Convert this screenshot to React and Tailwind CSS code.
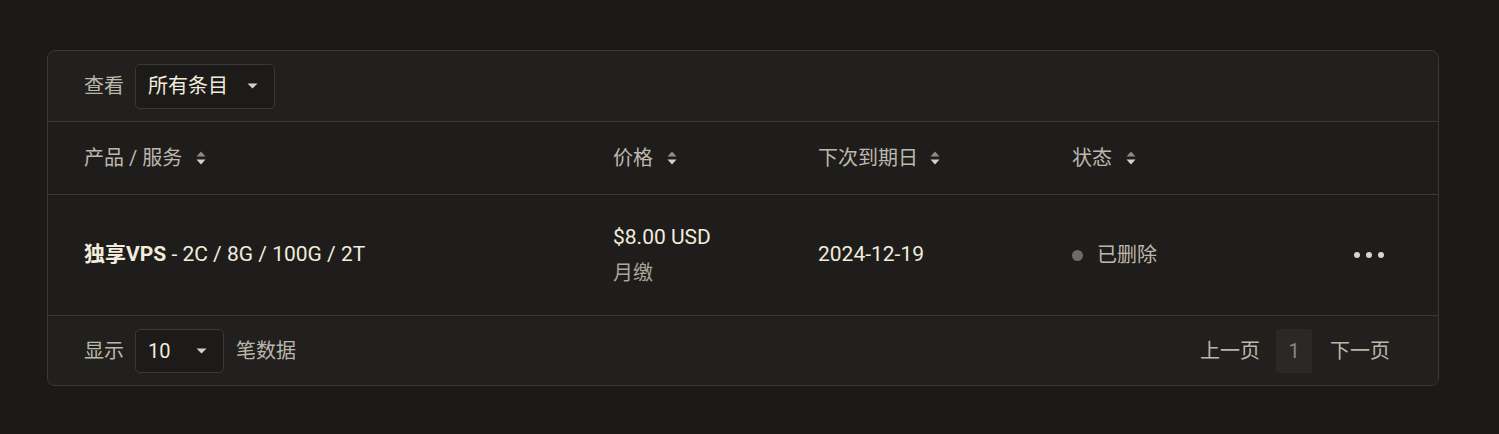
import React from "react";

const font = { fontFamily: 'Roboto, "Noto Sans CJK SC", "Noto Sans", sans-serif' };

function SortIcon({ gap = "ml-[14px]" }) {
  return (
    <svg width="10" height="18" viewBox="0 0 10 18" className={`${gap} shrink-0`}>
      <path d="M5 2.5 L9.5 7.5 L0.5 7.5 Z" fill="#8f8b84" />
      <path d="M5 15.5 L9.5 10.5 L0.5 10.5 Z" fill="#d6d1c6" />
    </svg>
  );
}

function Caret() {
  return (
    <svg width="11" height="6" viewBox="0 0 11 6">
      <path d="M0.5 0.5 L10.5 0.5 L5.5 5.5 Z" fill="#d6d1c6" />
    </svg>
  );
}

export default function App() {
  return (
    <div className="min-h-[434px] w-full bg-[#1b1a18] pt-[50px] px-[47px] text-[20px]" style={font}>
      <div className="w-[1392px] rounded-[8px] border border-[#3b3936] bg-[#1e1d1b] overflow-hidden">
        {/* toolbar */}
        <div className="h-[71px] flex items-center pl-[36px] bg-[#21201e] border-b border-[#3b3936]">
          <span className="text-[#bbb6ab]">查看</span>
          <div className="ml-[11px] h-[45px] w-[140px] rounded-[5px] border border-[#3b3936] bg-[#1c1b19] flex items-center pl-[12px] pr-[16px] justify-between">
            <span className="text-[#f1ecdc]">所有条目</span>
            <Caret />
          </div>
        </div>
        {/* header */}
        <div className="h-[73px] flex items-center pl-[36px] border-b border-[#3b3936] text-[#bdb8ad]">
          <div className="w-[529px] flex items-center">产品 / 服务<SortIcon /></div>
          <div className="w-[205px] flex items-center">价格<SortIcon /></div>
          <div className="w-[254px] flex items-center">下次到期日<SortIcon gap="ml-[12px]" /></div>
          <div className="flex items-center">状态<SortIcon /></div>
        </div>
        {/* row */}
        <div className="h-[121px] flex items-center pl-[36px] border-b border-[#3b3936] text-[21px]">
          <div className="w-[529px] text-[#f1ecdc]">
            <span className="font-bold">独享VPS</span> - 2C / 8G / 100G / 2T
          </div>
          <div className="w-[205px] flex flex-col">
            <span className="text-[#f1ecdc] leading-[26px]">$8.00 USD</span>
            <span className="text-[#aaa69c] text-[20px] mt-[10px] leading-[26px]">月缴</span>
          </div>
          <div className="w-[254px] text-[#f1ecdc]">2024-12-19</div>
          <div className="w-[268px] flex items-center text-[#bdb8ad] text-[20px]">
            <span className="w-[11px] h-[11px] rounded-full bg-[#6d6b68] mr-[14px]" />
            已删除
          </div>
          <div className="flex items-center gap-[6px] pl-[14px]">
            <span className="w-[6px] h-[6px] rounded-full bg-[#d9d4c9]" />
            <span className="w-[6px] h-[6px] rounded-full bg-[#d9d4c9]" />
            <span className="w-[6px] h-[6px] rounded-full bg-[#d9d4c9]" />
          </div>
        </div>
        {/* footer */}
        <div className="h-[69px] flex items-center pl-[36px] pr-[48px] bg-[#21201e]">
          <span className="text-[#bbb6ab]">显示</span>
          <div className="ml-[11px] h-[44px] w-[89px] rounded-[5px] border border-[#3b3936] bg-[#1c1b19] flex items-center pl-[12px] pr-[16px] justify-between">
            <span className="text-[#f1ecdc]">10</span>
            <Caret />
          </div>
          <span className="ml-[12px] text-[#bbb6ab]">笔数据</span>
          <div className="ml-auto flex items-center text-[#bbb6ab]">
            <span>上一页</span>
            <span className="ml-[16px] w-[36px] h-[44px] rounded-[3px] bg-[#2a2927] flex items-center justify-center text-[#8c8880]">1</span>
            <span className="ml-[18px]">下一页</span>
          </div>
        </div>
      </div>
    </div>
  );
}
